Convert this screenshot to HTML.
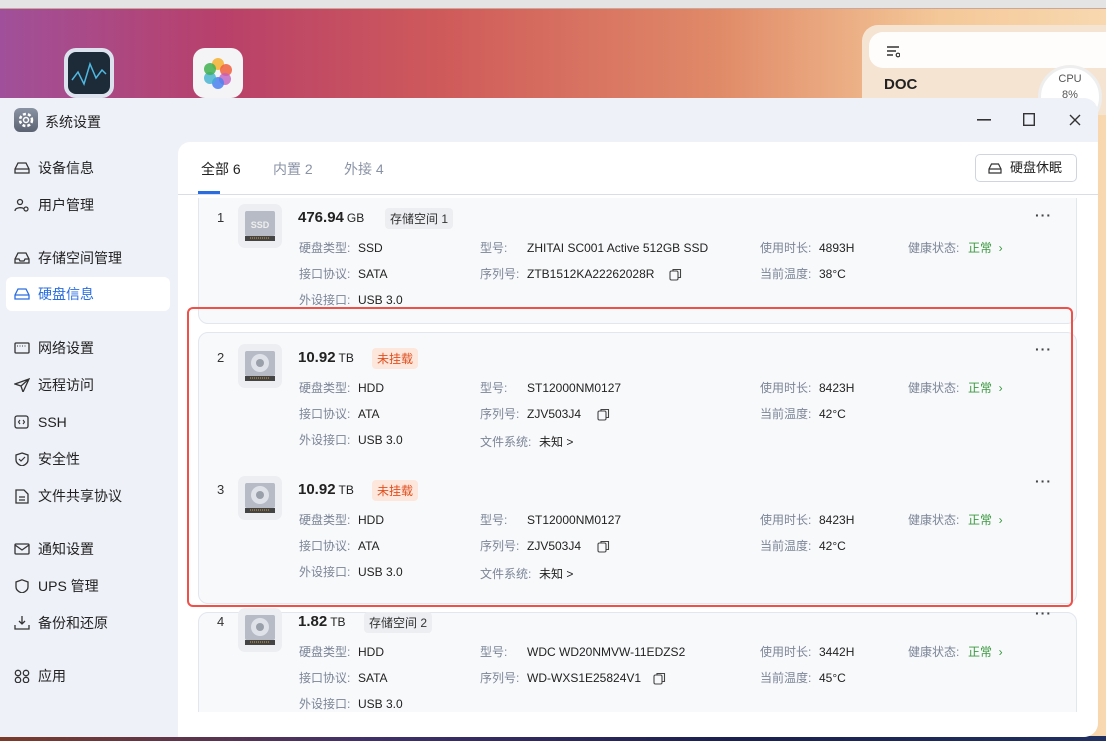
<!DOCTYPE html>
<html><head><meta charset="utf-8">
<style>
*{margin:0;padding:0;box-sizing:border-box;white-space:nowrap}
body{width:1106px;height:741px;overflow:hidden;position:relative;font-family:"Liberation Sans","Noto Sans CJK SC",sans-serif;background:linear-gradient(90deg,#a0509a 0%,#b8406a 20%,#cf5a5a 40%,#e08a68 65%,#f4c898 85%,#f8d8b0 100%)}
.topbar{position:absolute;left:0;top:0;width:1106px;height:9px;background:#e4e4e4;border-bottom:1px solid #c9a79a}
.botbg{position:absolute;left:0;top:736px;width:1106px;height:5px;background:linear-gradient(90deg,#7a3a2a,#40306a,#1a2050,#203060)}
.widget{position:absolute;left:862px;top:25px;width:260px;height:90px;background:#f5e4d2;border-radius:16px}
.widget .bar{position:absolute;left:7px;top:7px;width:250px;height:36px;background:#fffdfb;border-radius:14px}
.widget .doc{position:absolute;left:22px;top:51px;font-weight:bold;font-size:15px;color:#222}
.widget .cpu{position:absolute;left:176px;top:40px;width:64px;height:64px;border-radius:50%;border:3px solid #eee;background:#fff;font-size:11px;color:#555;text-align:center;padding-top:3px;line-height:16px}
.appicon{position:absolute;top:48px;width:50px;height:50px;border-radius:12px}
.win{position:absolute;left:0;top:98px;width:1098px;height:639px;background:#eef1f8;border-radius:0 14px 14px 0;overflow:hidden}
.title{position:absolute;left:45px;top:14px;font-size:14px;color:#222}
.gear{position:absolute;left:14px;top:10px;width:24px;height:24px;border-radius:6px;background:linear-gradient(#8a93a3,#5b6372)}
.ctl{position:absolute;top:12px;font-size:16px;color:#333}
.nav{position:absolute;left:0;font-size:14px;color:#222;width:170px;height:34px;line-height:34px;padding-left:38px}
.nav svg{position:absolute;left:14px;top:10px}
.nav.act{background:#fff;border-radius:6px;left:6px;width:164px;padding-left:32px;color:#2a6de0}
.nav.act svg{left:8px}
.panel{position:absolute;left:178px;top:44px;width:920px;height:600px;background:#fff;border-radius:12px 0 0 0}
.tabs{position:absolute;left:0;top:0;width:920px;height:53px;border-bottom:1px solid #d8dde8}
.tab{position:absolute;top:17px;font-size:14px;color:#8a93a6}
.tab.a{color:#222}
.uline{position:absolute;left:20px;top:49px;width:22px;height:3px;background:#2a6de0}
.sleep{position:absolute;right:21px;top:12px;width:102px;height:28px;border:1px solid #cfd5e0;border-radius:5px;font-size:13px;color:#222;line-height:26px;padding-left:34px}
.sleep svg{position:absolute;left:12px;top:8px}
.list{position:absolute;left:20px;top:56px;width:880px;height:514px;overflow:hidden}
.card{position:absolute;left:0;width:879px;background:#f8f9fb;border:1px solid #e2e6ee;border-radius:10px}
.grp{position:absolute;left:198px;width:900px}
.num{position:absolute;left:19px;font-size:13px;color:#333}
.icon{position:absolute;left:40px;width:44px;height:44px;background:#eceef2;border-radius:7px}
.sz{position:absolute;left:100px;font-size:15px;font-weight:bold;color:#222}
.sz span{font-weight:normal;font-size:12px;margin-left:3px}
.tag{position:absolute;font-size:12px;padding:2px 5px;border-radius:4px;background:#eceef2;color:#333}
.tag.o{background:#fde6dc;color:#e0501e}
.l{position:absolute;font-size:12px;color:#7b8597;margin-top:-2px}
.v{position:absolute;font-size:12px;color:#222}
.g{position:absolute;font-size:12px;color:#3a9a40;margin-top:-2px}
.dots{position:absolute;left:837px;font-size:14px;color:#444;letter-spacing:1px;font-weight:bold}
.red{position:absolute;left:187px;top:307px;width:886px;height:300px;border:2px solid #f05048;border-radius:6px}
</style></head><body>
<div class="topbar"></div>
<div class="botbg"></div>
<div class="appicon" style="left:64px;background:#dde3ee;padding:4px"><div style="width:42px;height:42px;background:#1d2a38;border-radius:8px"><svg width="42" height="42"><polyline points="4,28 10,20 16,32 22,12 28,26 34,18 38,22" fill="none" stroke="#4fb8e0" stroke-width="1.5"/></svg></div></div>
<div class="appicon" style="left:193px;background:#f4f4f6"><svg width="50" height="50"><circle cx="25" cy="16" r="6" fill="#f5b030" opacity=".85"/><circle cx="33" cy="22" r="6" fill="#f06040" opacity=".85"/><circle cx="32" cy="31" r="6" fill="#c060c0" opacity=".8"/><circle cx="25" cy="35" r="6" fill="#4a80f0" opacity=".85"/><circle cx="17" cy="30" r="6" fill="#40b0d0" opacity=".8"/><circle cx="17" cy="21" r="6" fill="#40b050" opacity=".85"/></svg></div>
<div class="widget"><div class="bar"><svg style="position:absolute;left:17px;top:12px" width="14" height="14"><path d="M1 3h12M1 7h9M1 11h6" stroke="#333" stroke-width="1.4"/><circle cx="12" cy="11" r="1.8" fill="none" stroke="#333" stroke-width="1.2"/></svg></div><div class="doc">DOC</div><div class="cpu">CPU<br>8%</div></div>

<div class="win">
<div class="gear"><svg width="24" height="24"><circle cx="12" cy="12" r="6" fill="none" stroke="#fff" stroke-width="2.5" stroke-dasharray="3 2"/><circle cx="12" cy="12" r="2.5" fill="none" stroke="#fff" stroke-width="1.5"/></svg></div>
<div class="title">系统设置</div>
<svg class="ctl" style="left:977px;top:21px" width="14" height="2"><rect width="14" height="1.6" fill="#333"/></svg>
<svg class="ctl" style="left:1023px;top:15px" width="12" height="13"><rect x=".7" y=".7" width="10.6" height="11.6" fill="none" stroke="#333" stroke-width="1.4"/></svg>
<svg class="ctl" style="left:1069px;top:16px" width="12" height="12"><path d="M1 1L11 11M11 1L1 11" stroke="#333" stroke-width="1.4"/></svg>

<div class="nav" style="top:53px"><svg width="16" height="14"><path d="M1 8l3-6h8l3 6v4H1z M1 8h14" fill="none" stroke="#333" stroke-width="1.3"/></svg>设备信息</div>
<div class="nav" style="top:90px"><svg width="16" height="14"><circle cx="6" cy="4" r="2.5" fill="none" stroke="#333" stroke-width="1.3"/><path d="M1 13c0-4 8-4 9-2" fill="none" stroke="#333" stroke-width="1.3"/><circle cx="12" cy="11" r="2" fill="none" stroke="#333" stroke-width="1.2"/></svg>用户管理</div>
<div class="nav" style="top:143px"><svg width="16" height="14"><path d="M1 8l3-6h8l3 6v4H1z M1 8h4l1 2h4l1-2h4" fill="none" stroke="#333" stroke-width="1.3"/></svg>存储空间管理</div>
<div class="nav act" style="top:179px"><svg width="16" height="14"><path d="M1 8l3-6h8l3 6v4H1z M1 8h14" fill="none" stroke="#2a6de0" stroke-width="1.3"/></svg>硬盘信息</div>
<div class="nav" style="top:233px"><svg width="16" height="14"><rect x="1" y="2" width="14" height="10" rx="1" fill="none" stroke="#333" stroke-width="1.3"/><path d="M3 5h10" stroke="#333" stroke-dasharray="1 1.5"/></svg>网络设置</div>
<div class="nav" style="top:270px"><svg width="16" height="14"><path d="M15 1L1 6l6 2 2 6z M7 8l8-7" fill="none" stroke="#333" stroke-width="1.3"/></svg>远程访问</div>
<div class="nav" style="top:307px"><svg width="16" height="14"><rect x="1" y="1" width="13" height="12" rx="2" fill="none" stroke="#333" stroke-width="1.3"/><path d="M6 5L4.5 7 6 9M9 5l1.5 2L9 9" fill="none" stroke="#333" stroke-width="1.1"/></svg>SSH</div>
<div class="nav" style="top:344px"><svg width="16" height="14"><path d="M8 1l6 2v5c0 3-3 5-6 6-3-1-6-3-6-6V3z" fill="none" stroke="#333" stroke-width="1.3"/><path d="M5 7l2 2 4-4" fill="none" stroke="#333" stroke-width="1.2"/></svg>安全性</div>
<div class="nav" style="top:381px"><svg width="16" height="15"><path d="M2 1h8l4 4v9H2z M5 8h6M5 11h6" fill="none" stroke="#333" stroke-width="1.3"/></svg>文件共享协议</div>
<div class="nav" style="top:434px"><svg width="16" height="14"><rect x="1" y="2" width="14" height="10" rx="1" fill="none" stroke="#333" stroke-width="1.3"/><path d="M1 3l7 5 7-5" fill="none" stroke="#333" stroke-width="1.3"/></svg>通知设置</div>
<div class="nav" style="top:471px"><svg width="16" height="14"><path d="M8 0.8l6 2.2v5c0 3-3 5-6 6-3-1-6-3-6-6V3z" fill="none" stroke="#333" stroke-width="1.3"/></svg>UPS 管理</div>
<div class="nav" style="top:508px"><svg width="16" height="14"><path d="M8 0v8M5 5l3 3 3-3M1 9v4h14V9" fill="none" stroke="#333" stroke-width="1.3"/></svg>备份和还原</div>
<div class="nav" style="top:561px"><svg width="16" height="14"><circle cx="4" cy="4" r="2.7" fill="none" stroke="#333" stroke-width="1.3"/><circle cx="12" cy="4" r="2.7" fill="none" stroke="#333" stroke-width="1.3"/><circle cx="4" cy="11" r="2.7" fill="none" stroke="#333" stroke-width="1.3"/><circle cx="12" cy="11" r="2.7" fill="none" stroke="#333" stroke-width="1.3"/></svg>应用</div>

<div class="panel">
<div class="tabs">
<div class="tab a" style="left:23px">全部 6</div>
<div class="tab" style="left:95px">内置 2</div>
<div class="tab" style="left:166px">外接 4</div>
<div class="uline"></div>
<div class="sleep"><svg width="14" height="11"><path d="M1 6l2.5-5h7L13 6v4H1z M1 6h12" fill="none" stroke="#333" stroke-width="1.2"/></svg>硬盘休眠</div>
</div>
<div class="list">
<div class="card" style="top:-20px;height:146px"></div>
<div class="card" style="top:134px;height:272px"></div>
<div class="card" style="top:414px;height:140px"></div>
</div>
</div>
</div>

<div class="grp" style="top:0">
<div class="num" style="top:210px">1</div>
<div class="icon" style="top:204px"><svg width="44" height="44"><rect x="7" y="7" width="30" height="25" rx="2" fill="#b6bbc6"/><text x="22" y="24" font-size="9" font-family="Liberation Sans" text-anchor="middle" fill="#eee" font-weight="bold">SSD</text><rect x="7" y="32" width="30" height="5" fill="#444"/><path d="M12 34h20" stroke="#e0a030" stroke-dasharray="1 1"/></svg></div>
<div class="sz" style="top:209px">476.94<span>GB</span></div>
<div class="tag" style="left:187px;top:208px">存储空间 1</div>
<div class="l" style="left:101px;top:241px">硬盘类型:</div><div class="v" style="left:160px;top:241px">SSD</div>
<div class="l" style="left:101px;top:267px">接口协议:</div><div class="v" style="left:160px;top:267px">SATA</div>
<div class="l" style="left:101px;top:293px">外设接口:</div><div class="v" style="left:160px;top:293px">USB 3.0</div>
<div class="l" style="left:282px;top:241px">型号:</div><div class="v" style="left:329px;top:241px">ZHITAI SC001 Active 512GB SSD</div>
<div class="l" style="left:282px;top:267px">序列号:</div><div class="v" style="left:329px;top:267px">ZTB1512KA22262028R</div>
<div class="l" style="left:562px;top:241px">使用时长:</div><div class="v" style="left:621px;top:241px">4893H</div>
<div class="l" style="left:562px;top:267px">当前温度:</div><div class="v" style="left:621px;top:267px">38°C</div>
<div class="l" style="left:710px;top:241px">健康状态:</div><div class="g" style="left:770px;top:241px">正常 &nbsp;›</div>
<div class="dots" style="top:207px">···</div>
</div>

<div class="grp" style="top:0">
<div class="num" style="top:350px">2</div>
<div class="icon" style="top:344px"><svg width="44" height="44"><rect x="7" y="7" width="30" height="25" rx="2" fill="#b6bbc6"/><circle cx="22" cy="19" r="9" fill="#dfe2e8"/><circle cx="22" cy="19" r="4" fill="#9aa0aa"/><rect x="7" y="32" width="30" height="5" fill="#444"/><path d="M12 34h20" stroke="#e0a030" stroke-dasharray="1 1"/></svg></div>
<div class="sz" style="top:349px">10.92<span>TB</span></div>
<div class="tag o" style="left:174px;top:348px">未挂载</div>
<div class="l" style="left:101px;top:381px">硬盘类型:</div><div class="v" style="left:160px;top:381px">HDD</div>
<div class="l" style="left:101px;top:407px">接口协议:</div><div class="v" style="left:160px;top:407px">ATA</div>
<div class="l" style="left:101px;top:433px">外设接口:</div><div class="v" style="left:160px;top:433px">USB 3.0</div>
<div class="l" style="left:282px;top:381px">型号:</div><div class="v" style="left:329px;top:381px">ST12000NM0127</div>
<div class="l" style="left:282px;top:407px">序列号:</div><div class="v" style="left:329px;top:407px">ZJV503J4</div>
<div class="l" style="left:282px;top:435px">文件系统:</div><div class="v" style="left:341px;top:433px">未知 &gt;</div>
<div class="l" style="left:562px;top:381px">使用时长:</div><div class="v" style="left:621px;top:381px">8423H</div>
<div class="l" style="left:562px;top:407px">当前温度:</div><div class="v" style="left:621px;top:407px">42°C</div>
<div class="l" style="left:710px;top:381px">健康状态:</div><div class="g" style="left:770px;top:381px">正常 &nbsp;›</div>
<div class="dots" style="top:341px">···</div>
</div>

<div class="grp" style="top:132px">
<div class="num" style="top:350px">3</div>
<div class="icon" style="top:344px"><svg width="44" height="44"><rect x="7" y="7" width="30" height="25" rx="2" fill="#b6bbc6"/><circle cx="22" cy="19" r="9" fill="#dfe2e8"/><circle cx="22" cy="19" r="4" fill="#9aa0aa"/><rect x="7" y="32" width="30" height="5" fill="#444"/><path d="M12 34h20" stroke="#e0a030" stroke-dasharray="1 1"/></svg></div>
<div class="sz" style="top:349px">10.92<span>TB</span></div>
<div class="tag o" style="left:174px;top:348px">未挂载</div>
<div class="l" style="left:101px;top:381px">硬盘类型:</div><div class="v" style="left:160px;top:381px">HDD</div>
<div class="l" style="left:101px;top:407px">接口协议:</div><div class="v" style="left:160px;top:407px">ATA</div>
<div class="l" style="left:101px;top:433px">外设接口:</div><div class="v" style="left:160px;top:433px">USB 3.0</div>
<div class="l" style="left:282px;top:381px">型号:</div><div class="v" style="left:329px;top:381px">ST12000NM0127</div>
<div class="l" style="left:282px;top:407px">序列号:</div><div class="v" style="left:329px;top:407px">ZJV503J4</div>
<div class="l" style="left:282px;top:435px">文件系统:</div><div class="v" style="left:341px;top:433px">未知 &gt;</div>
<div class="l" style="left:562px;top:381px">使用时长:</div><div class="v" style="left:621px;top:381px">8423H</div>
<div class="l" style="left:562px;top:407px">当前温度:</div><div class="v" style="left:621px;top:407px">42°C</div>
<div class="l" style="left:710px;top:381px">健康状态:</div><div class="g" style="left:770px;top:381px">正常 &nbsp;›</div>
<div class="dots" style="top:341px">···</div>
</div>

<div class="grp" style="top:264px;height:448px;overflow:hidden">
<div class="num" style="top:350px">4</div>
<div class="icon" style="top:344px"><svg width="44" height="44"><rect x="7" y="7" width="30" height="25" rx="2" fill="#b6bbc6"/><circle cx="22" cy="19" r="9" fill="#dfe2e8"/><circle cx="22" cy="19" r="4" fill="#9aa0aa"/><rect x="7" y="32" width="30" height="5" fill="#444"/><path d="M12 34h20" stroke="#e0a030" stroke-dasharray="1 1"/></svg></div>
<div class="sz" style="top:349px">1.82<span>TB</span></div>
<div class="tag" style="left:166px;top:348px">存储空间 2</div>
<div class="l" style="left:101px;top:381px">硬盘类型:</div><div class="v" style="left:160px;top:381px">HDD</div>
<div class="l" style="left:101px;top:407px">接口协议:</div><div class="v" style="left:160px;top:407px">SATA</div>
<div class="l" style="left:101px;top:433px">外设接口:</div><div class="v" style="left:160px;top:433px">USB 3.0</div>
<div class="l" style="left:282px;top:381px">型号:</div><div class="v" style="left:329px;top:381px">WDC WD20NMVW-11EDZS2</div>
<div class="l" style="left:282px;top:407px">序列号:</div><div class="v" style="left:329px;top:407px">WD-WXS1E25824V1</div>
<div class="l" style="left:562px;top:381px">使用时长:</div><div class="v" style="left:621px;top:381px">3442H</div>
<div class="l" style="left:562px;top:407px">当前温度:</div><div class="v" style="left:621px;top:407px">45°C</div>
<div class="l" style="left:710px;top:381px">健康状态:</div><div class="g" style="left:770px;top:381px">正常 &nbsp;›</div>
<div class="dots" style="top:341px">···</div>
</div>

<svg style="position:absolute;left:669px;top:268px" width="13" height="13"><rect x="1" y="3" width="8" height="9" rx="1.5" fill="none" stroke="#444" stroke-width="1.1"/><path d="M4 3V1.5h7.5v8H9" fill="none" stroke="#444" stroke-width="1.1"/></svg>
<svg style="position:absolute;left:597px;top:408px" width="13" height="13"><rect x="1" y="3" width="8" height="9" rx="1.5" fill="none" stroke="#444" stroke-width="1.1"/><path d="M4 3V1.5h7.5v8H9" fill="none" stroke="#444" stroke-width="1.1"/></svg>
<svg style="position:absolute;left:597px;top:540px" width="13" height="13"><rect x="1" y="3" width="8" height="9" rx="1.5" fill="none" stroke="#444" stroke-width="1.1"/><path d="M4 3V1.5h7.5v8H9" fill="none" stroke="#444" stroke-width="1.1"/></svg>
<svg style="position:absolute;left:653px;top:672px" width="13" height="13"><rect x="1" y="3" width="8" height="9" rx="1.5" fill="none" stroke="#444" stroke-width="1.1"/><path d="M4 3V1.5h7.5v8H9" fill="none" stroke="#444" stroke-width="1.1"/></svg>

<div class="red"></div>
</body></html>
